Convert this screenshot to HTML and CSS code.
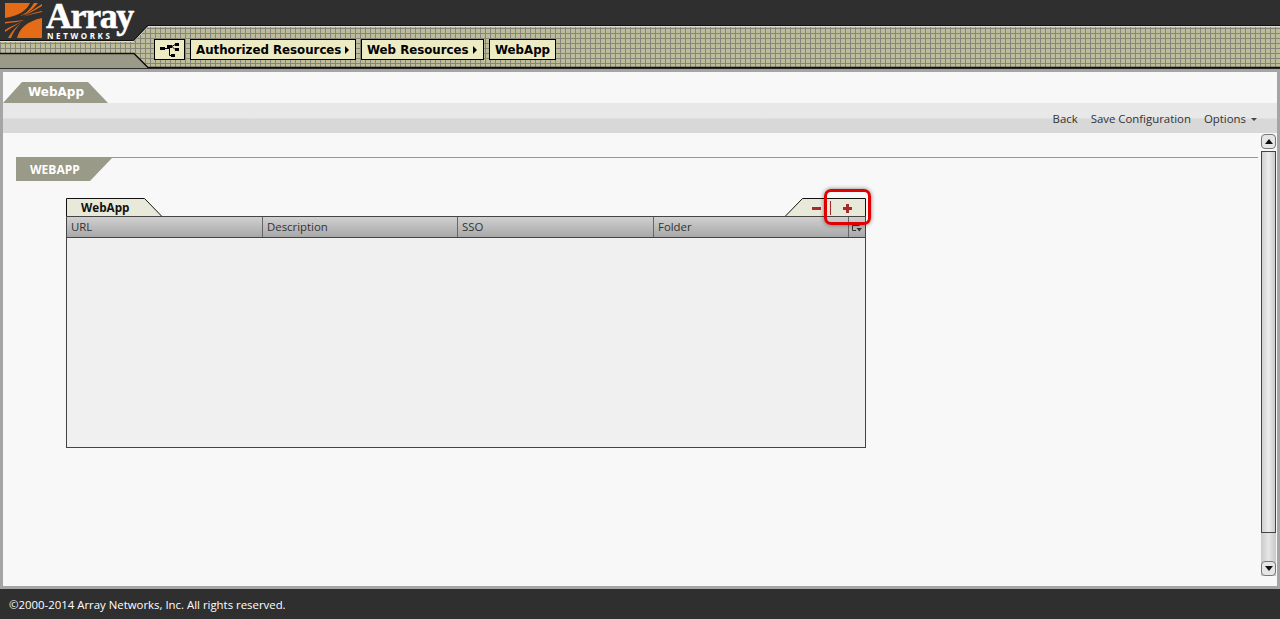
FILE: index.html
```html
<!DOCTYPE html>
<html>
<head>
    <title>WebApp</title>
    <link rel="stylesheet" href="styles.css">
</head>
<body>
    <header class="top">
        <svg class="top-bg" width="1280" height="72" viewBox="0 0 1280 72">
            <defs>
                <pattern id="mesh" width="5" height="5" patternUnits="userSpaceOnUse" y="3">
                    <rect width="5" height="5" fill="#bdbd99"/>
                    <rect width="5" height="1" fill="#85857c"/>
                    <rect width="1" height="5" fill="#85857c"/>
                </pattern>
            </defs>
            <rect width="1280" height="72" fill="#2f2f2f"/>
            <path d="M0 42H134L148 27H1280V68H148L134 53H0Z" fill="url(#mesh)"/>
            <path d="M0 54H134L148 68H0Z" fill="#9a9a88"/>
            <path d="M0 41.500H134L148 26.500H1280" fill="none" stroke="#dcdcd0" stroke-width="1"/>
            <path d="M0 40.500H133.500L147.500 25.500H1280" fill="none" stroke="#111" stroke-width="1"/>
            <path d="M0 53.500H134L148 67.500H1280" fill="none" stroke="#111" stroke-width="1.500"/>
            <rect y="69" width="1280" height="3" fill="#a5a5a5"/>
        </svg>
        <div class="logo">
            <svg class="logo-mark" width="37" height="35" viewBox="0 0 37 35">
                <g fill="#e46c17">
                    <path d="M0 0H25C22 7 14 13 0 15Z"/>
                    <path d="M37 15V35H12C14 26 22 18 37 15Z"/>
                    <path d="M15 13C22 10 26 5 29 0H33C28 6 23 11 15 13Z"/>
                    <path d="M17 13C24 10 30 5 37 1V3C30 7 24 11 17 13Z"/>
                    <path d="M19 13.500C25 11 31 9 37 8V9C31 10 25 12 19 13.500Z"/>
                    <path d="M20 17C14 18 6 18 0 19V20.500C7 19.500 14 19 20 17Z"/>
                    <path d="M18 18C12 21 6 23 0 27V29C6 25 12 21 18 18Z"/>
                    <path d="M16 20C11 24 6 29 3 35H6C8 29 12 24 16 20Z"/>
                </g>
            </svg>
            <div class="logo-text">
                <div class="logo-name">Array</div>
                <div class="logo-sub">NETWORKS</div>
            </div>
        </div>
        <nav class="crumbs">
            <span class="crumb crumb-icon">
                <svg width="19" height="14" viewBox="0 0 19 14">
                    <path d="M0 4h5v3H0zM7 2h5v3H7zM15 0h4v3h-4zM15 5h4v3h-4zM11 11h4v3h-4z" fill="#000"/>
                    <path d="M5 5.500h4M9.500 4v8.500H11M12 3.500l3-2M12 3.500l3 3" stroke="#000" fill="none"/>
                </svg>
            </span>
            <a class="crumb crumb-a">Authorized Resources<i class="arrow"></i></a>
            <a class="crumb crumb-b">Web Resources<i class="arrow"></i></a>
            <a class="crumb crumb-c">WebApp</a>
        </nav>
    </header>

    <main class="main">
        <div class="page-tabs">
            <div class="page-tab">WebApp</div>
        </div>
        <div class="toolbar">
            <a>Back</a>
            <a>Save Configuration</a>
            <a>Options<i class="caret"></i></a>
        </div>

        <div class="content">
            <div class="scroll-area">
                <div class="section">
                    <div class="section-title">WEBAPP</div>
                </div>

                <div class="table-wrap">
                    <div class="table-tabs">
                        <div class="table-tab">
                            <svg class="tab-bg" width="96" height="18" viewBox="0 0 96 18">
                                <path d="M0.500 18V0.500H78.500L95.500 18" fill="#e9e9da" stroke="#111"/>
                            </svg>
                            <span class="tab-label">WebApp</span>
                        </div>
                        <div class="table-tools">
                            <svg class="tools-bg" width="81" height="18" viewBox="0 0 81 18">
                                <path d="M0.500 18L17.500 0.500H80.500V18" fill="#e9e9da" stroke="#111"/>
                            </svg>
                            <span class="tool-minus"></span>
                            <span class="tool-sep"></span>
                            <span class="tool-plus"></span>
                            <span class="tool-mark"></span>
                        </div>
                    </div>
                    <div class="table">
                        <div class="table-head">
                            <div>URL</div>
                            <div>Description</div>
                            <div>SSO</div>
                            <div>Folder</div>
                            <div class="col-config">
                                <svg width="10" height="7" viewBox="0 0 10 7">
                                    <path d="M7.500 0.500H0.500V5.500H4" fill="none" stroke="#333"/>
                                    <path d="M4.500 3h5.500L7.250 6.500z" fill="#333"/>
                                </svg>
                            </div>
                        </div>
                        <div class="table-body"></div>
                    </div>
                </div>
            </div>

            <div class="scrollbar">
                <div class="scroll-btn"><i class="tri-up"></i></div>
                <div class="scroll-track">
                    <div class="scroll-thumb"></div>
                    <div class="scroll-btn"><i class="tri-down"></i></div>
                </div>
            </div>
        </div>
    </main>

    <footer class="footer">©2000-2014 Array Networks, Inc. All rights reserved.</footer>
</body>
</html>
```

FILE: styles.css
```css
body {
    margin: 0;
    height: 619px;
    display: flex;
    flex-direction: column;
    overflow: hidden;
    background: #f8f8f8;
    font-family: 'Open Sans', sans-serif;
    font-size: 11.400px;
    color: #333;
}

/* header */
.top {
    position: relative;
    height: 72px;
    flex: none;
}

.top-bg {
    position: absolute;
    left: 0;
    top: 0;
}

.logo {
    position: relative;
    display: flex;
    gap: 4px;
    padding: 3px 0 0 5px;
}

.logo-name {
    font-family: 'Liberation Serif', serif;
    font-weight: bold;
    font-size: 36px;
    letter-spacing: -1.400px;
    line-height: 27px;
    height: 27px;
    color: #fff;
    -webkit-text-stroke: 0.500px #fff;
}

.logo-sub {
    margin: 1px 0 0 1px;
    font-family: 'Open Sans', sans-serif;
    font-weight: bold;
    font-size: 8px;
    line-height: 9px;
    letter-spacing: 2.600px;
    color: #fff;
}

.crumbs {
    position: absolute;
    left: 154px;
    top: 39px;
    display: flex;
    gap: 5px;
}

.crumb {
    box-sizing: border-box;
    height: 21px;
    display: flex;
    align-items: center;
    border: 1px solid #000;
    background: #ecebc3;
    padding: 0 5px;
    font-family: 'DejaVu Sans', sans-serif;
    font-weight: bold;
    font-size: 11.800px;
    color: #000;
    white-space: nowrap;
}

.crumb-icon {
    width: 31px;
    justify-content: center;
    padding: 0;
}

.crumb-a {
    width: 166px;
}

.crumb-b {
    width: 123px;
}

.crumb-c {
    width: 67px;
}

.arrow {
    margin-left: 4px;
    border-left: 4px solid #000;
    border-top: 4px solid transparent;
    border-bottom: 4px solid transparent;
}

/* main panel */
.main {
    flex: 1;
    min-height: 0;
    display: flex;
    flex-direction: column;
    border-left: 3px solid #a5a5a5;
    border-right: 3px solid #a5a5a5;
    border-bottom: 3px solid #a5a5a5;
    background: #f8f8f8;
}

.page-tabs {
    height: 21px;
    padding-top: 10px;
    flex: none;
}

.page-tab {
    box-sizing: border-box;
    width: 105px;
    height: 21px;
    padding-left: 25px;
    line-height: 21px;
    background: #9a9a88;
    clip-path: polygon(0 100%, 19px 0, 85px 0, 100% 100%);
    font-family: 'DejaVu Sans', sans-serif;
    font-weight: bold;
    font-size: 12px;
    color: #fff;
}

.toolbar {
    flex: none;
    height: 30px;
    display: flex;
    justify-content: flex-end;
    align-items: center;
    gap: 13px;
    padding-right: 20px;
    background: linear-gradient(#e8e8e8 0, #e8e8e8 50%, #d8d8d8 53%, #d8d8d8 100%);
    color: #333;
}

.caret {
    display: inline-block;
    margin: 0 0 2px 5px;
    border-top: 3px solid #444;
    border-left: 3px solid transparent;
    border-right: 3px solid transparent;
}

.content {
    flex: 1;
    min-height: 0;
    display: flex;
}

.scroll-area {
    flex: 1;
    min-width: 0;
    padding: 24px 3px 0 13px;
}

.section {
    box-sizing: border-box;
    height: 24px;
    border-top: 1px solid #9a9a88;
}

.section-title {
    box-sizing: border-box;
    width: 96px;
    height: 23px;
    padding-left: 14px;
    line-height: 23px;
    background: #9a9a88;
    clip-path: polygon(0 0, 100% 0, 74px 100%, 0 100%);
    font-weight: bold;
    font-size: 12px;
    color: #fff;
}

.table-wrap {
    width: 800px;
    margin: 17px 0 0 50px;
}

.table-tabs {
    height: 18px;
    display: flex;
    justify-content: space-between;
    align-items: flex-end;
}

.table-tab {
    position: relative;
    width: 96px;
    height: 18px;
}

.tab-bg {
    position: absolute;
    left: 0;
    top: 0;
}

.tab-label {
    position: relative;
    display: block;
    padding-left: 15px;
    line-height: 19px;
    font-weight: bold;
    font-size: 11.700px;
    color: #111;
}

.table-tools {
    position: relative;
    width: 81px;
    height: 18px;
}

.tools-bg {
    position: absolute;
    left: 0;
    top: 0;
}

.tool-minus {
    position: absolute;
    left: 27px;
    top: 9px;
    width: 9px;
    height: 3px;
    background: #a52a2a;
}

.tool-sep {
    position: absolute;
    left: 45px;
    top: 3px;
    width: 1px;
    height: 14px;
    background: #a52a2a;
}

.tool-plus {
    position: absolute;
    left: 58px;
    top: 9px;
    width: 9px;
    height: 3px;
    background: #a52a2a;
}

.tool-plus::after {
    content: "";
    position: absolute;
    left: 3px;
    top: -3px;
    width: 3px;
    height: 9px;
    background: #a52a2a;
}

/* red highlight round the add button */
.tool-mark {
    position: absolute;
    left: 39px;
    top: -9px;
    width: 47px;
    height: 36px;
    box-sizing: border-box;
    border: 3px solid #e00000;
    border-radius: 7px;
    box-shadow: 0 0 4px rgba(0, 0, 0, 0.5);
}

.table {
    border: 1px solid #444;
}

.table-head {
    display: grid;
    grid-template-columns: 196px 195px 196px 195px 1fr;
    height: 20px;
    background: linear-gradient(#d0d0d0, #a8a8a8);
    border-bottom: 1px solid #444;
}

.table-head div {
    box-sizing: border-box;
    padding-left: 4px;
    line-height: 20px;
    border-right: 1px solid #666;
    color: #333;
}

.table-head .col-config {
    display: flex;
    align-items: flex-start;
    border-right: none;
    padding: 8px 0 0 3px;
}

.table-body {
    height: 209px;
    background: #f0f0f0;
}

/* scrollbar */
.scrollbar {
    flex: none;
    width: 15px;
    margin: 1px 1px 10px 0;
    display: flex;
    flex-direction: column;
    gap: 2px;
}

.scroll-btn {
    box-sizing: border-box;
    height: 15px;
    flex: none;
    display: flex;
    align-items: center;
    justify-content: center;
    border: 1px solid #777;
    border-radius: 4px;
    background: #e6e6e6;
}

.scroll-track {
    flex: 1;
    display: flex;
    flex-direction: column;
    justify-content: space-between;
    background: linear-gradient(90deg, #cacaca, #e6e6e6 50%, #c8c8c8);
}

.scroll-thumb {
    box-sizing: border-box;
    height: 382px;
    border: 1px solid #444;
    background: linear-gradient(90deg, #d0d0d0, #ececec 50%, #cccccc);
}

.tri-up {
    border-bottom: 5px solid #111;
    border-left: 4px solid transparent;
    border-right: 4px solid transparent;
}

.tri-down {
    border-top: 5px solid #111;
    border-left: 4px solid transparent;
    border-right: 4px solid transparent;
}

.footer {
    flex: none;
    height: 30px;
    padding-left: 9px;
    line-height: 31px;
    background: #2f2f2f;
    color: #fff;
}
```
